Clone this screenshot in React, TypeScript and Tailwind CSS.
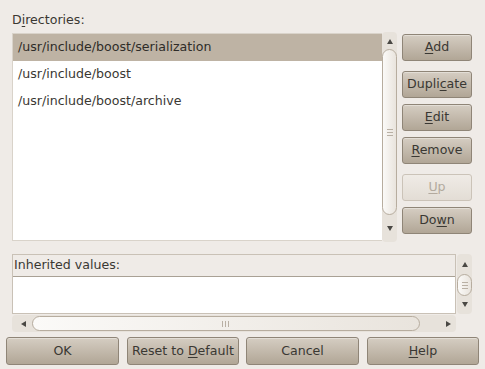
import React from 'react';
import clsx from 'clsx';

const U: React.FC<{ children: React.ReactNode }> = ({ children }) => (
  <span className="underline underline-offset-[2px] decoration-1">{children}</span>
);

interface BtnProps {
  children: React.ReactNode;
  disabled?: boolean;
  className?: string;
}

// Ubuntu "Human" style push button
const Btn: React.FC<BtnProps> = ({ children, disabled = false, className }) => (
  <div
    className={clsx(
      'h-[27px] flex items-center justify-center rounded-[3px] border leading-none',
      disabled
        ? 'border-[#cbc3b8] bg-gradient-to-b from-[#efebe6] to-[#e3ddd5] text-[#b3aa9e]'
        : 'border-[#8f8577] bg-gradient-to-b from-[#d5cdc2] to-[#b1a696] text-[#3a3833] shadow-[inset_0_1px_0_rgba(255,255,255,0.35)]',
      className
    )}
  >
    <span className="whitespace-pre">{children}</span>
  </div>
);

const Arrow: React.FC<{ dir: 'up' | 'down' | 'left' | 'right' }> = ({ dir }) => {
  const pts = {
    up: '0,5 3,0 6,5',
    down: '0,0 6,0 3,5',
    left: '5,0 5,6 0,3',
    right: '0,0 0,6 5,3',
  }[dir];
  const vert = dir === 'up' || dir === 'down';
  return (
    <svg width={vert ? 6 : 5} height={vert ? 5 : 6} viewBox={vert ? '0 0 6 5' : '0 0 5 6'}>
      <polygon points={pts} fill="#4a4844" />
    </svg>
  );
};

const Grip: React.FC<{ vertical?: boolean }> = ({ vertical = true }) => (
  <div className={clsx('flex gap-[2px]', vertical ? 'flex-col' : 'flex-row')}>
    {[0, 1, 2].map((i) => (
      <div key={i} className={clsx('bg-[#b9b0a4]', vertical ? 'w-[6px] h-px' : 'h-[6px] w-px')} />
    ))}
  </div>
);

const thumb =
  'rounded-full border border-[#b7ad9f] bg-gradient-to-r from-[#fbfaf8] to-[#e9e4dd]';

const VScroll: React.FC<{ thumbTop: number; thumbH: number; className?: string }> = ({
  thumbTop,
  thumbH,
  className,
}) => (
  <div className={clsx('w-[15px] flex flex-col items-center bg-[#e7e2db] rounded-[4px]', className)}>
    <div className="h-[13px] flex items-end justify-center">
      <Arrow dir="up" />
    </div>
    <div className="flex-1 w-full relative">
      <div
        className={clsx('absolute left-0 right-0 flex items-center justify-center', thumb)}
        style={{ top: thumbTop, height: thumbH }}
      >
        <Grip />
      </div>
    </div>
    <div className="h-[13px] flex items-start justify-center pt-[1px]">
      <Arrow dir="down" />
    </div>
  </div>
);

const App: React.FC = () => {
  const dirs = ['/usr/include/boost/serialization', '/usr/include/boost', '/usr/include/boost/archive'];

  return (
    <div
      className="w-[485px] h-[369px] bg-[#efebe7] text-[#3a3833] text-[12.6px] overflow-hidden"
      style={{ fontFamily: '"DejaVu Sans", "Liberation Sans", sans-serif' }}
    >
      <div className="pl-[12px] pt-[11px] h-[33px] leading-[17px]">
        D<U>i</U>rectories:
      </div>

      <div className="flex pl-[12px]">
        {/* directory list */}
        <div className="w-[370px] h-[208px] bg-white border-l border-t border-b border-[#d9d3ca] flex flex-col">
          {dirs.map((d, i) => (
            <div
              key={d}
              className={clsx(
                'h-[27px] flex items-center pl-[5px]',
                i === 0 ? 'bg-[#beb3a4] text-[#2e2c28]' : 'text-[#3a3833]'
              )}
            >
              {d}
            </div>
          ))}
        </div>
        <div className="w-[15px] h-[210px] -mt-[1px] flex flex-col items-center bg-[#e7e2db] rounded-[4px]">
          <div className="h-[17px] flex items-center justify-center pt-[2px]">
            <Arrow dir="up" />
          </div>
          <div className={clsx('w-full h-[166px] flex items-center justify-center', thumb)}>
            <Grip />
          </div>
          <div className="flex-1 flex items-center justify-center">
            <Arrow dir="down" />
          </div>
        </div>

        {/* side buttons */}
        <div className="ml-[5px] w-[70px] flex flex-col">
          <Btn className="mt-[1px]">
            <U>A</U>dd
          </Btn>
          <Btn className="mt-[10px]">
            Dupli<U>c</U>ate
          </Btn>
          <Btn className="mt-[6px]">
            <U>E</U>dit
          </Btn>
          <Btn className="mt-[6px]">
            <U>R</U>emove
          </Btn>
          <Btn className="mt-[10px]" disabled>
            <U>U</U>p
          </Btn>
          <Btn className="mt-[6px]">
            Do<U>w</U>n
          </Btn>
        </div>
      </div>

      {/* inherited values */}
      <div className="flex pl-[12px] mt-[12px]">
        <div className="w-[444px] flex flex-col">
          <div className="h-[60px] border border-[#c9c1b6] flex flex-col">
            <div className="h-[22px] bg-[#efebe7] border-b border-[#a9a195] flex items-center pl-[1px] leading-none">
              Inherited values:
            </div>
            <div className="flex-1 bg-white" />
          </div>
          <div className="h-[17px] mt-[1px] flex items-center bg-[#e7e2db] rounded-[4px]">
            <div className="w-[20px] flex justify-center pl-[2px]">
              <Arrow dir="left" />
            </div>
            <div className={clsx('w-[388px] h-[15px] flex items-center justify-end pr-[190px]', thumb)}>
              <Grip vertical={false} />
            </div>
            <div className="flex-1 flex justify-end pr-[5px]">
              <Arrow dir="right" />
            </div>
          </div>
        </div>
        <VScroll className="h-[60px] ml-[1px]" thumbTop={7} thumbH={22} />
      </div>

      {/* dialog buttons */}
      <div className="flex pl-[6px] mt-[5px]">
        <Btn className="w-[113px] h-[28px]">OK</Btn>
        <Btn className="w-[112px] h-[28px] ml-[8px]">
          Reset to <U>D</U>efault
        </Btn>
        <Btn className="w-[113px] h-[28px] ml-[7px]">Cancel</Btn>
        <Btn className="w-[112px] h-[28px] ml-[8px]">
          <U>H</U>elp
        </Btn>
      </div>
    </div>
  );
};

export default App;
